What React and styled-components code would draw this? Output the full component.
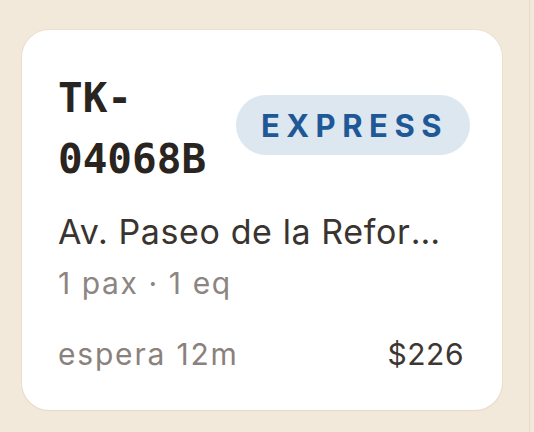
import React from 'react';
import styled, { createGlobalStyle } from 'styled-components';

const GlobalStyle = createGlobalStyle`
    html, body {
        margin: 0;
        padding: 0;
        background: #f3e9da;
    }
    body {
        font-family: Inter, "Noto Sans", "Liberation Sans", sans-serif;
    }
`;

const ticket = {
    code: 'TK-04068B',
    tier: 'EXPRESS',
    address: 'Av. Paseo de la Reforma 222, Juárez, CDMX',
    pax: 1,
    equipment: 1,
    waitMinutes: 12,
    fare: 226
};

const TicketCard = ({ data }) => {
    return (
        <Card>
            <Header>
                <Code>{data.code}</Code>
                <Badge>{data.tier}</Badge>
            </Header>
            <Address>{data.address}</Address>
            <Meta>{data.pax} pax · {data.equipment} eq</Meta>
            <Footer>
                <Wait>espera {data.waitMinutes}m</Wait>
                <Fare>${data.fare}</Fare>
            </Footer>
        </Card>
    );
};

const App = () => (
    <>
        <GlobalStyle />
        <Column>
            <TicketCard data={ticket} />
        </Column>
    </>
);

export default App;

const Column = styled.div`
    box-sizing: border-box;
    width: 530px;
    min-height: 432px;
    padding: 30px 28px 0 22px;
    border-right: 1px solid #e7dccb;
`;

const Card = styled.div`
    box-sizing: border-box;
    width: 480px;
    height: 380px;
    padding: 38px 32px 36px 36px;
    background: #ffffff;
    border-radius: 27px;
    box-shadow: 0 0 0 1px rgba(150, 115, 70, 0.07), 0 1px 2px rgba(120, 90, 50, 0.06);
    display: flex;
    flex-direction: column;
`;

const Header = styled.div`
    display: flex;
    align-items: center;
    justify-content: space-between;
    gap: 12px;
`;

const Code = styled.div`
    flex: 1 1 auto;
    min-width: 0;
    font-family: "DejaVu Sans Mono", "Liberation Mono", monospace;
    font-weight: 700;
    font-size: 41px;
    line-height: 61px;
    color: #2a2421;
`;

const Badge = styled.span`
    flex-shrink: 0;
    display: inline-flex;
    align-items: center;
    height: 60px;
    padding: 0 22px 0 25px;
    margin-top: -8px;
    border-radius: 30px;
    background: #dde7f0;
    color: #1f5897;
    font-size: 31px;
    font-weight: 700;
    letter-spacing: 6.5px;
`;

const Address = styled.div`
    margin-top: 21px;
    max-width: 396px;
    font-size: 34px;
    line-height: 41px;
    letter-spacing: 0.6px;
    color: #3a3431;
    white-space: nowrap;
    overflow: hidden;
    text-overflow: ellipsis;
`;

const Meta = styled.div`
    margin-top: 13px;
    font-size: 30px;
    line-height: 36px;
    letter-spacing: 1.6px;
    color: #8c8581;
`;

const Footer = styled.div`
    margin-top: 35px;
    display: flex;
    align-items: baseline;
    justify-content: space-between;
    padding-right: 6px;
    font-size: 30px;
    line-height: 36px;
`;

const Wait = styled.span`
    letter-spacing: 1.8px;
    color: #8a817c;
`;

const Fare = styled.span`
    letter-spacing: 0.5px;
    color: #3d3734;
`;
